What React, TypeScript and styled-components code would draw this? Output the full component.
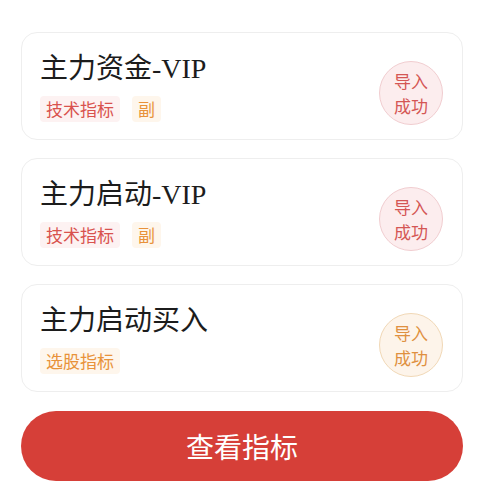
import React from 'react';
import styled, { createGlobalStyle } from 'styled-components';

const GlobalStyle = createGlobalStyle`
    html, body {
        margin: 0;
        padding: 0;
        background: #ffffff;
    }
    body {
        font-family: "Noto Sans CJK SC", "Noto Sans", sans-serif;
    }
`;

type Tone = 'red' | 'orange';

const tones: Record<Tone, { text: string; bg: string; ring: string; ringBg: string; ringText: string }> = {
    red: { text: '#d9524e', bg: '#fdf2f2', ring: '#f1cdd0', ringBg: '#fcedee', ringText: '#d45654' },
    orange: { text: '#e8923a', bg: '#fef6ec', ring: '#f1d8b6', ringBg: '#fdf4ea', ringText: '#df9040' }
};

const Page = styled.div`
    display: flex;
    flex-direction: column;
    gap: 18px;
    padding: 32px 16px 0 21px;
`;

const Card = styled.div`
    display: flex;
    align-items: center;
    height: 108px;
    box-sizing: border-box;
    padding: 17px 19px 18px 18px;
    border: 1px solid #eeeeee;
    border-radius: 16px;
    background: #ffffff;
`;

const Info = styled.div`
    flex: 1;
    display: flex;
    flex-direction: column;
    gap: 9px;
`;

const Title = styled.div`
    font-family: "Liberation Serif", "Noto Sans CJK SC", serif;
    font-size: 28px;
    line-height: 37px;
    color: #1c1c1c;
`;

const TagRow = styled.div`
    display: flex;
    gap: 12px;
`;

const Tag = styled.span<{ $tone: Tone }>`
    font-size: 17px;
    line-height: 26px;
    padding: 0 6px;
    border-radius: 4px;
    color: ${p => tones[p.$tone].text};
    background: ${p => tones[p.$tone].bg};
`;

const Badge = styled.div<{ $tone: Tone }>`
    width: 64px;
    height: 64px;
    margin-top: 14px;
    box-sizing: border-box;
    border-radius: 50%;
    border: 1px solid ${p => tones[p.$tone].ring};
    background: ${p => tones[p.$tone].ringBg};
    color: ${p => tones[p.$tone].ringText};
    display: flex;
    flex-direction: column;
    align-items: center;
    justify-content: center;
    font-size: 17px;
    line-height: 25px;
`;

const ViewButton = styled.button`
    margin-top: 1px;
    height: 70px;
    border: none;
    border-radius: 35px;
    background: #d63f38;
    color: #ffffff;
    font-family: "Noto Sans CJK SC", sans-serif;
    font-size: 28px;
    cursor: pointer;
`;

const items: { title: string; tags: { label: string; tone: Tone }[]; tone: Tone }[] = [
    { title: '主力资金-VIP', tags: [{ label: '技术指标', tone: 'red' }, { label: '副', tone: 'orange' }], tone: 'red' },
    { title: '主力启动-VIP', tags: [{ label: '技术指标', tone: 'red' }, { label: '副', tone: 'orange' }], tone: 'red' },
    { title: '主力启动买入', tags: [{ label: '选股指标', tone: 'orange' }], tone: 'orange' }
];

const App = () => (
    <>
        <GlobalStyle />
        <Page>
            {items.map(item => (
                <Card key={item.title}>
                    <Info>
                        <Title>{item.title}</Title>
                        <TagRow>
                            {item.tags.map(tag => (
                                <Tag key={tag.label} $tone={tag.tone}>
                                    {tag.label}
                                </Tag>
                            ))}
                        </TagRow>
                    </Info>
                    <Badge $tone={item.tone}>
                        <span>导入</span>
                        <span>成功</span>
                    </Badge>
                </Card>
            ))}
            <ViewButton>查看指标</ViewButton>
        </Page>
    </>
);

export default App;
